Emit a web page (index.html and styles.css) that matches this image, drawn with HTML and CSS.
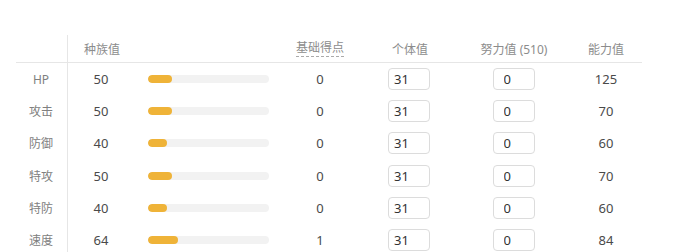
FILE: index.html
```html
<!DOCTYPE html>
<html lang="zh">
<head>
<meta charset="utf-8">
<link rel="stylesheet" href="styles.css">
</head>
<body>
<div class="stats">
  <div class="row head">
    <div class="c label"></div>
    <div class="c base-h">种族值</div>
    <div class="c center"><span class="dashed">基础得点</span></div>
    <div class="c center">个体值</div>
    <div class="c center">努力值 (510)</div>
    <div class="c center last">能力值</div>
  </div>
  <div class="row">
    <div class="c label">HP</div><div class="c num">50</div>
    <div class="c bar"><div class="track"><div class="fill" style="width:23.7px"></div></div></div>
    <div class="c num">0</div>
    <div class="c center"><input class="iv" value="31"></div>
    <div class="c center"><input class="ev" value="0"></div>
    <div class="c num last">125</div>
  </div>
  <div class="row">
    <div class="c label">攻击</div><div class="c num">50</div>
    <div class="c bar"><div class="track"><div class="fill" style="width:23.7px"></div></div></div>
    <div class="c num">0</div>
    <div class="c center"><input class="iv" value="31"></div>
    <div class="c center"><input class="ev" value="0"></div>
    <div class="c num last">70</div>
  </div>
  <div class="row">
    <div class="c label">防御</div><div class="c num">40</div>
    <div class="c bar"><div class="track"><div class="fill" style="width:19px"></div></div></div>
    <div class="c num">0</div>
    <div class="c center"><input class="iv" value="31"></div>
    <div class="c center"><input class="ev" value="0"></div>
    <div class="c num last">60</div>
  </div>
  <div class="row">
    <div class="c label">特攻</div><div class="c num">50</div>
    <div class="c bar"><div class="track"><div class="fill" style="width:23.7px"></div></div></div>
    <div class="c num">0</div>
    <div class="c center"><input class="iv" value="31"></div>
    <div class="c center"><input class="ev" value="0"></div>
    <div class="c num last">70</div>
  </div>
  <div class="row">
    <div class="c label">特防</div><div class="c num">40</div>
    <div class="c bar"><div class="track"><div class="fill" style="width:19px"></div></div></div>
    <div class="c num">0</div>
    <div class="c center"><input class="iv" value="31"></div>
    <div class="c center"><input class="ev" value="0"></div>
    <div class="c num last">60</div>
  </div>
  <div class="row">
    <div class="c label">速度</div><div class="c num">64</div>
    <div class="c bar"><div class="track"><div class="fill" style="width:30.4px"></div></div></div>
    <div class="c num">1</div>
    <div class="c center"><input class="iv" value="31"></div>
    <div class="c center"><input class="ev" value="0"></div>
    <div class="c num last">84</div>
  </div>
</div>
</body>
</html>
```
FILE: styles.css
```css
html, body {
  margin: 0;
  padding: 0;
  background: #fff;
}
body {
  font-family: "Noto Sans", "Noto Sans CJK SC", sans-serif;
  color: #444;
  overflow: hidden;
  height: 252px;
}
.stats {
  margin: 35px 0 0 16px;
  width: 626px;
}
.row {
  display: grid;
  grid-template-columns: 52px 66px 149px 74px 106px 102px 77px;
  height: 32.2px;
  align-items: center;
}
.row.head {
  height: 27px;
  border-bottom: 1px solid #e6e6e6;
  font-size: 12px;
  color: #8c8c8c;
}
.c {
  height: 100%;
  display: flex;
  align-items: center;
  min-width: 0;
}
.label {
  justify-content: center;
  border-right: 1px solid #e6e6e6;
  font-size: 12px;
  color: #808080;
  padding-right: 1px;
}
.base-h {
  grid-column: span 2;
  padding-left: 16px;
}
.center {
  justify-content: center;
}
.num {
  justify-content: center;
  font-size: 13px;
  color: #4a4a4a;
}
.last {
  padding-left: 5px;
}
.dashed {
  border-bottom: 1px dashed #aaa;
  line-height: 15px;
  padding-bottom: 1px;
}
.bar {
  padding-left: 14px;
}
.track {
  width: 121px;
  height: 8px;
  border-radius: 4px;
  background: #f2f2f2;
  overflow: hidden;
}
.fill {
  height: 100%;
  border-radius: 4px;
  background: #efb338;
}
input {
  box-sizing: border-box;
  width: 42px;
  height: 22px;
  border: 1px solid #dcdcdc;
  border-radius: 4px;
  padding: 0 0 0 5px;
  font-family: "Noto Sans", sans-serif;
  font-size: 13px;
  color: #333;
  background: #fff;
  outline: none;
}
.iv {
  margin-right: 2px;
}
.ev {
  padding-left: 10px;
  margin-right: 1px;
}
```
